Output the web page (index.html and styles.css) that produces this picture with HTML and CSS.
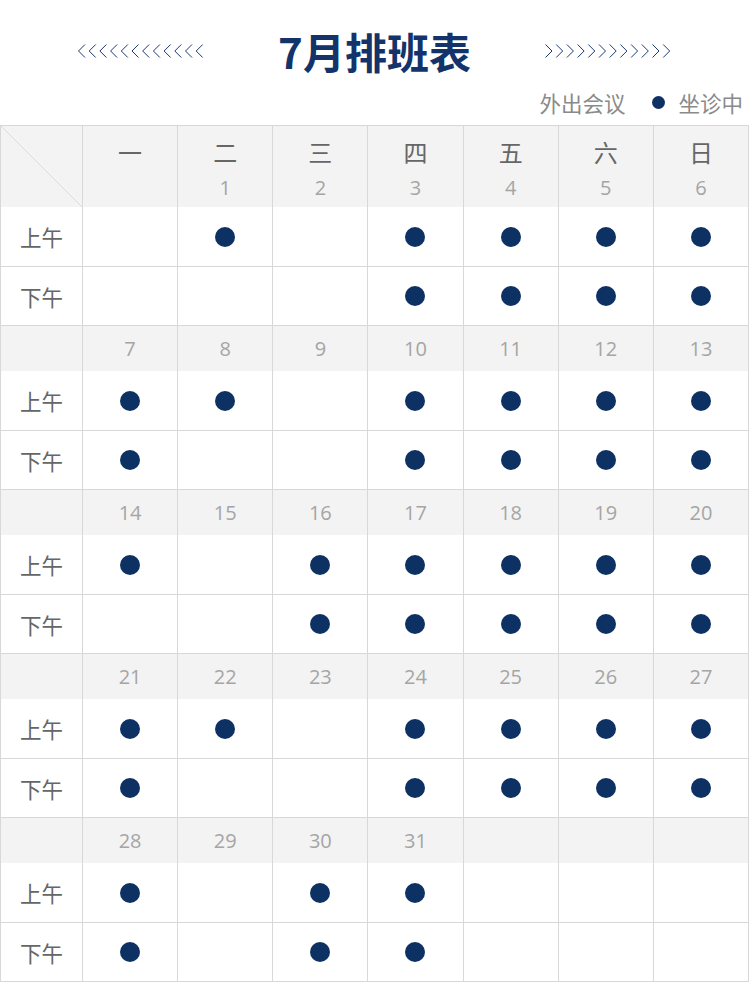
FILE: index.html
```html
<!DOCTYPE html>
<html lang="zh">
<head>
<meta charset="utf-8">
<title>7月排班表</title>
<link rel="stylesheet" href="styles.css">
</head>
<body>
<div class="top">
  <div class="title-row">
    <svg class="chev" width="128" height="14" viewBox="0 0 128 14">
      <path d="M8 0.5L1.5 7L8 13.5M18.7 0.5L12.2 7L18.7 13.5M29.4 0.5L22.9 7L29.4 13.5M40.1 0.5L33.6 7L40.1 13.5M50.8 0.5L44.3 7L50.8 13.5M61.5 0.5L55 7L61.5 13.5M72.2 0.5L65.7 7L72.2 13.5M82.9 0.5L76.4 7L82.9 13.5M93.6 0.5L87.1 7L93.6 13.5M104.3 0.5L97.8 7L104.3 13.5M115 0.5L108.5 7L115 13.5M125.7 0.5L119.2 7L125.7 13.5"/>
    </svg>
    <h1 class="title">7月排班表</h1>
    <svg class="chev" width="128" height="14" viewBox="0 0 128 14">
      <path d="M1.5 0.5L8 7L1.5 13.5M12.2 0.5L18.7 7L12.2 13.5M22.9 0.5L29.4 7L22.9 13.5M33.6 0.5L40.1 7L33.6 13.5M44.3 0.5L50.8 7L44.3 13.5M55 0.5L61.5 7L55 13.5M65.7 0.5L72.2 7L65.7 13.5M76.4 0.5L82.9 7L76.4 13.5M87.1 0.5L93.6 7L87.1 13.5M97.8 0.5L104.3 7L97.8 13.5M108.5 0.5L115 7L108.5 13.5M119.2 0.5L125.7 7L119.2 13.5"/>
    </svg>
  </div>
  <div class="legend">
    <span>外出会议</span>
    <i class="ldot"></i>
    <span>坐诊中</span>
  </div>
</div>

<div class="cal">
  <div class="c head corner"></div>
  <div class="c head"><b>一</b><em>&nbsp;</em></div>
  <div class="c head"><b>二</b><em>1</em></div>
  <div class="c head"><b>三</b><em>2</em></div>
  <div class="c head"><b>四</b><em>3</em></div>
  <div class="c head"><b>五</b><em>4</em></div>
  <div class="c head"><b>六</b><em>5</em></div>
  <div class="c head"><b>日</b><em>6</em></div>

  <div class="c am lbl">上午</div>
  <div class="c am"></div><div class="c am"><i class="dot"></i></div><div class="c am"></div><div class="c am"><i class="dot"></i></div><div class="c am"><i class="dot"></i></div><div class="c am"><i class="dot"></i></div><div class="c am"><i class="dot"></i></div>
  <div class="c pm lbl">下午</div>
  <div class="c pm"></div><div class="c pm"></div><div class="c pm"></div><div class="c pm"><i class="dot"></i></div><div class="c pm"><i class="dot"></i></div><div class="c pm"><i class="dot"></i></div><div class="c pm"><i class="dot"></i></div>

  <div class="c wk"></div><div class="c wk">7</div><div class="c wk">8</div><div class="c wk">9</div><div class="c wk">10</div><div class="c wk">11</div><div class="c wk">12</div><div class="c wk">13</div>
  <div class="c am lbl">上午</div>
  <div class="c am"><i class="dot"></i></div><div class="c am"><i class="dot"></i></div><div class="c am"></div><div class="c am"><i class="dot"></i></div><div class="c am"><i class="dot"></i></div><div class="c am"><i class="dot"></i></div><div class="c am"><i class="dot"></i></div>
  <div class="c pm lbl">下午</div>
  <div class="c pm"><i class="dot"></i></div><div class="c pm"></div><div class="c pm"></div><div class="c pm"><i class="dot"></i></div><div class="c pm"><i class="dot"></i></div><div class="c pm"><i class="dot"></i></div><div class="c pm"><i class="dot"></i></div>

  <div class="c wk"></div><div class="c wk">14</div><div class="c wk">15</div><div class="c wk">16</div><div class="c wk">17</div><div class="c wk">18</div><div class="c wk">19</div><div class="c wk">20</div>
  <div class="c am lbl">上午</div>
  <div class="c am"><i class="dot"></i></div><div class="c am"></div><div class="c am"><i class="dot"></i></div><div class="c am"><i class="dot"></i></div><div class="c am"><i class="dot"></i></div><div class="c am"><i class="dot"></i></div><div class="c am"><i class="dot"></i></div>
  <div class="c pm lbl">下午</div>
  <div class="c pm"></div><div class="c pm"></div><div class="c pm"><i class="dot"></i></div><div class="c pm"><i class="dot"></i></div><div class="c pm"><i class="dot"></i></div><div class="c pm"><i class="dot"></i></div><div class="c pm"><i class="dot"></i></div>

  <div class="c wk"></div><div class="c wk">21</div><div class="c wk">22</div><div class="c wk">23</div><div class="c wk">24</div><div class="c wk">25</div><div class="c wk">26</div><div class="c wk">27</div>
  <div class="c am lbl">上午</div>
  <div class="c am"><i class="dot"></i></div><div class="c am"><i class="dot"></i></div><div class="c am"></div><div class="c am"><i class="dot"></i></div><div class="c am"><i class="dot"></i></div><div class="c am"><i class="dot"></i></div><div class="c am"><i class="dot"></i></div>
  <div class="c pm lbl">下午</div>
  <div class="c pm"><i class="dot"></i></div><div class="c pm"></div><div class="c pm"></div><div class="c pm"><i class="dot"></i></div><div class="c pm"><i class="dot"></i></div><div class="c pm"><i class="dot"></i></div><div class="c pm"><i class="dot"></i></div>

  <div class="c wk"></div><div class="c wk">28</div><div class="c wk">29</div><div class="c wk">30</div><div class="c wk">31</div><div class="c wk"></div><div class="c wk"></div><div class="c wk"></div>
  <div class="c am lbl">上午</div>
  <div class="c am"><i class="dot"></i></div><div class="c am"></div><div class="c am"><i class="dot"></i></div><div class="c am"><i class="dot"></i></div><div class="c am"></div><div class="c am"></div><div class="c am"></div>
  <div class="c pm lbl">下午</div>
  <div class="c pm"><i class="dot"></i></div><div class="c pm"></div><div class="c pm"><i class="dot"></i></div><div class="c pm"><i class="dot"></i></div><div class="c pm"></div><div class="c pm"></div><div class="c pm"></div>
</div>
</body>
</html>
```

FILE: styles.css
```css
* { box-sizing: border-box; }
html, body { margin: 0; padding: 0; background: #fff; }
body {
  width: 749px;
  font-family: "Noto Sans CJK SC", "Open Sans", sans-serif;
}
.top {
  height: 125px;
  display: flex;
  flex-direction: column;
}
.title-row {
  height: 86px;
  padding-top: 16px;
  display: flex;
  align-items: center;
  justify-content: center;
  gap: 73px;
}
.chev path {
  fill: none;
  stroke: #1b3a6e;
  stroke-width: 1;
}
.title {
  margin: 0;
  font-size: 42px;
  line-height: 50px;
  font-weight: 700;
  color: #14336b;
  letter-spacing: 0;
}
.legend {
  display: flex;
  align-items: center;
  justify-content: flex-end;
  padding-right: 6px;
  padding-bottom: 2px;
  height: 34px;
  font-size: 21.5px;
  color: #8a8a8a;
}
.ldot {
  width: 13px;
  height: 13px;
  border-radius: 50%;
  background: #0e3163;
  margin: 0 13px 0 27px;
}
.cal {
  width: 749px;
  display: grid;
  grid-template-columns: 82px repeat(7, 1fr);
  grid-auto-rows: auto;
  border-left: 1px solid #d8d8d8;
  border-top: 1px solid #d8d8d8;
}
.c {
  border-right: 1px solid #d8d8d8;
  display: flex;
  align-items: center;
  justify-content: center;
}
.head {
  height: 81px;
  background: #f3f3f3;
  flex-direction: column;
  justify-content: flex-start;
  padding-top: 9px;
}
.head b {
  font-weight: 400;
  font-size: 24px;
  line-height: 34px;
  color: #666;
}
.head em {
  font-style: normal;
  font-family: "Open Sans", sans-serif;
  font-size: 20px;
  line-height: 32px;
  padding-top: 3px;
  color: #a5a5a5;
}
.corner {
  background: #f3f3f3 linear-gradient(to top right, transparent calc(50% - 0.6px), #dcdcdc calc(50% - 0.6px), #dcdcdc calc(50% + 0.6px), transparent calc(50% + 0.6px));
}
.am {
  height: 60px;
  border-bottom: 1px solid #d8d8d8;
}
.pm {
  height: 59px;
  border-bottom: 1px solid #d8d8d8;
}
.wk {
  height: 45px;
  background: #f3f3f3;
  font-family: "Open Sans", sans-serif;
  font-size: 20px;
  color: #a5a5a5;
}
.lbl {
  font-size: 21.5px;
  color: #666;
}
.dot {
  width: 20px;
  height: 20px;
  border-radius: 50%;
  background: #0e3163;
}
```
